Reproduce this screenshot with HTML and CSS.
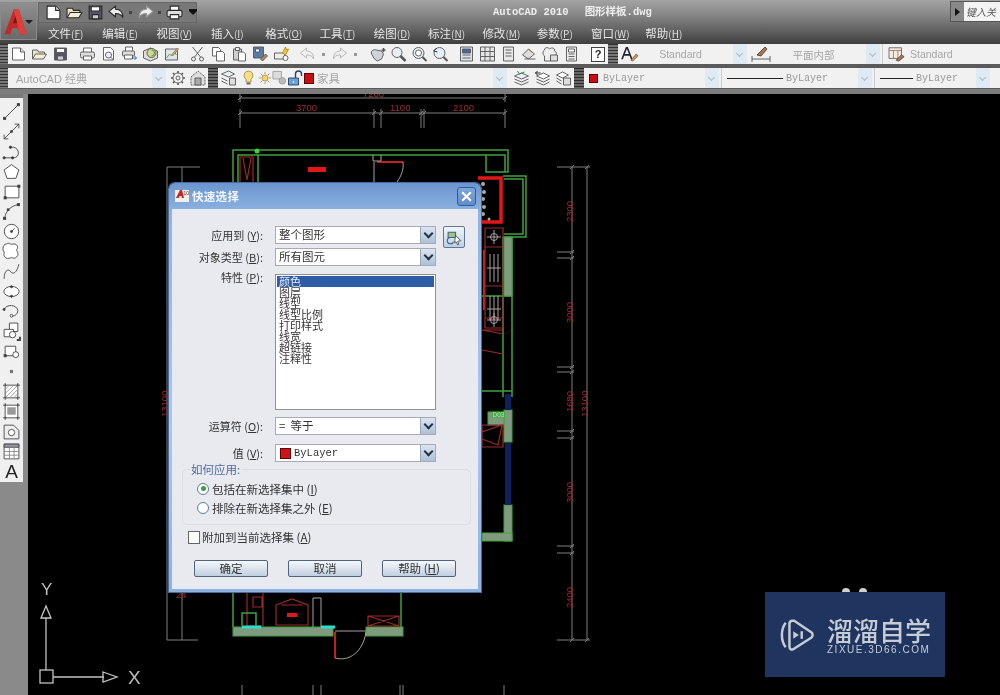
FILE: index.html
```html
<!DOCTYPE html>
<html lang="zh">
<head>
<meta charset="utf-8">
<title>AutoCAD 2010 - 图形样板.dwg</title>
<link rel="stylesheet" href="styles.css">
</head>
<body>
<svg class="defs" width="0" height="0">
<defs>
<symbol id="new" viewBox="0 0 16 16"><path d="M2 2h8l4 4v8H2z" fill="#fff"/><path d="M10 2v4h4" fill="#ddd"/></symbol>
<symbol id="open" viewBox="0 0 16 16"><path d="M1 13V4h5l1 2h6v2" fill="#e8e4c8"/><path d="M1 13l3-5h11l-3 5z" fill="#f4f0d8"/></symbol>
<symbol id="save" viewBox="0 0 16 16"><path d="M2 2h12v12H2z" fill="#556"/><path d="M4 2.500h8v4H4z" fill="#fff"/><path d="M5 10h6v4H5z" fill="#ccc"/></symbol>
<symbol id="print" viewBox="0 0 16 16"><path d="M4 6V2h8v4" fill="#fff"/><rect x="1" y="6" width="14" height="6" rx="1.500" fill="#ddd"/><path d="M4 10h8v4H4z" fill="#fff"/></symbol>
<symbol id="preview" viewBox="0 0 16 16"><path d="M3 1.500h7l3 3V14H3z" fill="#fff"/><circle cx="8" cy="9" r="3" fill="#eef"/><path d="M10 11l3 3"/></symbol>
<symbol id="publish" viewBox="0 0 16 16"><path d="M4 5V1h7v4" fill="#fff"/><rect x="1" y="5" width="12" height="5" rx="1" fill="#ddd"/><path d="M3 9h8v4H3z" fill="#fff"/><path d="M10 12h5m-2-2l2 2-2 2" stroke="#26a"/></symbol>
<symbol id="plot3d" viewBox="0 0 16 16"><path d="M1 5l7-3 7 3v7l-7 3-7-3z" fill="#ddd"/><circle cx="9" cy="7" r="4.500" fill="#cdd890"/><path d="M9 4a3 3 0 0 1 0 6" stroke="#683"/></symbol>
<symbol id="sheet" viewBox="0 0 16 16"><path d="M2 3h12v11H2z" fill="#dfe4ea"/><path d="M3 12l3-4 2 2 3-4 2 3" stroke="#693"/><path d="M8 9l6-7 1 1-6 7z" fill="#eb6" stroke="#875"/></symbol>
<symbol id="cut" viewBox="0 0 16 16"><path d="M3 1l8 10M13 1L5 11"/><circle cx="4" cy="13" r="2"/><circle cx="12" cy="13" r="2"/></symbol>
<symbol id="copy" viewBox="0 0 16 16"><path d="M2 1.500h6l2 2V10H2z" fill="#fff"/><path d="M6 5.500h6l2 2V15H6z" fill="#fff"/></symbol>
<symbol id="paste" viewBox="0 0 16 16"><path d="M2 3h8v11H2z" fill="#cfcfcf"/><path d="M4 1.500h4v3H4z" fill="#eee"/><path d="M7 6h5l2 2v7H7z" fill="#fff"/></symbol>
<symbol id="match" viewBox="0 0 16 16"><path d="M1 1h10v11H1z" fill="#5a7aa8"/><path d="M3 3h4v3H3z" fill="#fff"/><path d="M8 13l5-5 2 2-5 5z" fill="#a86" stroke="#654"/></symbol>
<symbol id="block" viewBox="0 0 16 16"><path d="M1 7h10v6H1z" fill="#eee"/><circle cx="12" cy="12" r="2.500" fill="#fff"/><path d="M9 7l3-6 1 3 2-1-3 6z" fill="#f1c94a" stroke="#b80"/></symbol>
<symbol id="undo" viewBox="0 0 16 16"><path d="M7 2L1 7l6 5V9c4 0 6 1 7 4 0-6-3-8-7-8z" fill="#eee"/></symbol>
<symbol id="redo" viewBox="0 0 16 16"><path d="M9 2l6 5-6 5V9c-4 0-6 1-7 4 0-6 3-8 7-8z" fill="#eee"/></symbol>
<symbol id="pan" viewBox="0 0 16 16"><path d="M2 8c-1-3 2-5 5-4l5 1 2 3-2 5-4 2-3-2z" fill="#cfd2d8"/><path d="M12 4h4M14 2v4" stroke-width="1.500"/></symbol>
<symbol id="zoom" viewBox="0 0 16 16"><circle cx="6.500" cy="6.500" r="5" fill="#e6eef8"/><path d="M10 10l5 5" stroke-width="2.500"/></symbol>
<symbol id="zoomw" viewBox="0 0 16 16"><circle cx="7" cy="7" r="5.500" fill="#e6eef8"/><circle cx="7" cy="7" r="3" fill="#fff"/><path d="M11 11l4 4" stroke-width="2"/></symbol>
<symbol id="zoomp" viewBox="0 0 16 16"><circle cx="7" cy="7" r="5.500" fill="#e6eef8"/><path d="M11 11l4 4" stroke-width="2"/><path d="M4 2L1 5l4 1" stroke="#135"/></symbol>
<symbol id="props" viewBox="0 0 16 16"><path d="M2 1h12v14H2z" fill="#dde3ea"/><path d="M4 3h8v4H4z" fill="#46a"/><path d="M4 9h8M4 12h8"/></symbol>
<symbol id="center" viewBox="0 0 16 16"><path d="M1 1h14v14H1z" fill="#e6e6e6"/><path d="M5.500 1v14M10.500 1v14M1 5.500h14M1 10.500h14"/></symbol>
<symbol id="palette" viewBox="0 0 16 16"><path d="M3 1h10v14H3z" fill="#e8e8e8"/><path d="M5 4h6M5 7h6M5 10h6"/></symbol>
<symbol id="sheetset" viewBox="0 0 16 16"><path d="M1 9l6-6 6 5-6 5z" fill="#ddd"/><path d="M3 13h11" /><path d="M7 3l4 4" stroke="#b80"/></symbol>
<symbol id="markup" viewBox="0 0 16 16"><path d="M2 4c0-3 4-3 5-1 2-2 6-1 5 2 3 1 2 5-1 5H8v5H2v-5c-2-1-2-5 0-6z" fill="#eee"/><path d="M8 9h7v6H8z" fill="#ddd"/></symbol>
<symbol id="calc" viewBox="0 0 16 16"><path d="M3 1h10v14H3z" fill="#eee"/><path d="M5 3h6v3H5z" fill="#fff"/><path d="M5 8h6M5 10.500h6M5 13h6"/></symbol>
<symbol id="stytext" viewBox="0 0 20 18"><path d="M1 15L6 2h1l5 13M3.500 10h7" stroke-width="1.800" stroke="#223"/><path d="M11 16l6-7 2 2-6 6z" fill="#c94" stroke="#754"/></symbol>
<symbol id="stydim" viewBox="0 0 20 18"><path d="M1 11v6M19 11v6M1 14h18"/><path d="M6 10l8-8 2 2-6 7z" fill="#a75" stroke="#543"/></symbol>
<symbol id="stytbl" viewBox="0 0 20 18"><path d="M1 2h14v12H1z" fill="#f3ece0"/><path d="M1 5h14M6 5v9M11 5v9" stroke="#a65"/><path d="M9 16l6-6 3 2-6 5z" fill="#a75" stroke="#543"/></symbol>
<symbol id="gear" viewBox="0 0 16 16"><circle cx="8" cy="8" r="5" fill="none"/><circle cx="8" cy="8" r="2" fill="none"/><path d="M8 1v2M8 13v2M1 8h2M13 8h2M3 3l1.500 1.500M11.500 11.500L13 13M13 3l-1.500 1.500M4.500 11.500L3 13" stroke-width="1.600"/></symbol>
<symbol id="wsp" viewBox="0 0 16 16"><path d="M1 7l7-6 7 6v8H1z" fill="#ddd" stroke-dasharray="2 1"/><path d="M5 8h6v7H5z" fill="#aaa"/></symbol>
<symbol id="layers" viewBox="0 0 16 16"><path d="M1 4l7-3 6 3-6 3z" fill="#e8eef6"/><path d="M1 8l6 3" /><path d="M9 8h6v7H9z" fill="#ddd"/><path d="M1 11l6 3"/></symbol>
<symbol id="layst" viewBox="0 0 16 16"><path d="M1 6l7-3 7 3-7 3z" fill="#eef"/><path d="M1 9l7 3 7-3M1 12l7 3 7-3"/><path d="M4 1l2 3 5-2" stroke="#283"/></symbol>
<symbol id="layprev" viewBox="0 0 16 16"><path d="M2 6l7-3 6 3-6 3z" fill="#fff"/><path d="M2 9l7 3 6-3M2 12l7 3 6-3"/><path d="M1 3h5M1 3l2-2M1 3l2 2" stroke="#111"/></symbol>
<symbol id="laymat" viewBox="0 0 16 16"><path d="M1 5l6-3 6 3-6 3z" fill="#fff"/><path d="M1 8l5 3M1 11l5 3"/><path d="M8 8h7v7H8z" fill="#ddd"/></symbol>
<symbol id="bulb" viewBox="0 0 12 16"><path d="M6 1a4.500 4.500 0 0 1 2.500 8.200V12h-5V9.200A4.500 4.500 0 0 1 6 1z" fill="#f6e27a" stroke="#a87"/><path d="M4 13.500h4" stroke="#667" stroke-width="2"/></symbol>
<symbol id="sun" viewBox="0 0 16 16"><circle cx="8" cy="8" r="3.500" fill="#f4d65a" stroke="#a86"/><path d="M8 1v2.500M8 12.500V15M1 8h2.500M12.500 8H15M3 3l2 2M11 11l2 2M13 3l-2 2M5 11l-2 2" stroke="#a86"/></symbol>
<symbol id="frz" viewBox="0 0 16 16"><path d="M1 1h9v8H1z" fill="#ddd" stroke="#999"/><circle cx="11" cy="11" r="3.500" fill="#bbb" stroke="#999"/></symbol>
<symbol id="lock" viewBox="0 0 16 16"><path d="M1 8h10v7H1z" fill="#6ba3d6" stroke="#246"/><path d="M8 8V4a3 3 0 0 1 6 0v2" stroke="#246" stroke-width="1.400"/><path d="M6 11v2" stroke="#fff"/></symbol>

<symbol id="t-line" viewBox="0 0 18 18"><path d="M2.500 15.500l13-13"/><rect x="1.500" y="14.500" width="2" height="2" fill="#333"/><rect x="14.500" y="1.500" width="2" height="2" fill="#333"/></symbol>
<symbol id="t-xline" viewBox="0 0 18 18"><path d="M2 16L16 2M2 16v-4M2 16h4M16 2h-4M16 2v4"/><circle cx="9" cy="9" r="1" fill="#333"/></symbol>
<symbol id="t-pline" viewBox="0 0 18 18"><path d="M2 15h9c6 0 6-9 0-10H8"/><circle cx="2" cy="15" r="1.100" fill="#333"/><circle cx="10" cy="15" r="1.100" fill="#333"/><circle cx="8" cy="5" r="1.100" fill="#333"/></symbol>
<symbol id="t-poly" viewBox="0 0 18 18"><path d="M9 2.500l7 5-2.800 8H4.800L2 7.500z" fill="#fff"/></symbol>
<symbol id="t-rect" viewBox="0 0 18 18"><path d="M3 4h13v11H3z" fill="#fff"/><rect x="2" y="14" width="2" height="2" fill="#333"/><rect x="15" y="3" width="2" height="2" fill="#333"/></symbol>
<symbol id="t-arc" viewBox="0 0 18 18"><path d="M2.500 15.500C3.500 8 9 3.500 15.500 2.500"/><rect x="1.500" y="14.500" width="2" height="2" fill="#333"/><rect x="14.500" y="1.500" width="2" height="2" fill="#333"/><rect x="5" y="6.500" width="1.600" height="1.600" fill="#333"/></symbol>
<symbol id="t-circle" viewBox="0 0 18 18"><circle cx="9" cy="9" r="6.800" fill="#fff"/><circle cx="9" cy="9" r="1" fill="#333"/><path d="M9 9l3-3"/></symbol>
<symbol id="t-cloud" viewBox="0 0 18 18"><path d="M4 2c3-2 4 1 6 0 4-1 6 3 4 5-1 1 3 4 0 7-3 3-4 0-6 1-4 2-7-2-6-4 1-2-2-3-1-5 0-2 1-4 3-4z" fill="#fff"/></symbol>
<symbol id="t-spline" viewBox="0 0 18 18"><path d="M2 16C2 8 6 6 8 9s6 2 8-7"/></symbol>
<symbol id="t-ellipse" viewBox="0 0 18 18"><ellipse cx="9" cy="9" rx="7.200" ry="4.800" fill="#fff"/><circle cx="9" cy="4.500" r="1" fill="#333"/><circle cx="9" cy="13.500" r="1" fill="#333"/></symbol>
<symbol id="t-earc" viewBox="0 0 18 18"><path d="M2 7c2-5 12-5 13 1 0 4-4 6-6 5"/><circle cx="2" cy="7" r="1" fill="#333"/><circle cx="9" cy="13" r="1.300" fill="#fff"/></symbol>
<symbol id="t-insert" viewBox="0 0 18 18"><path d="M7 1h8v8H7z" fill="#fff"/><path d="M2 7h9v7H2z" fill="#fff"/><circle cx="10" cy="12" r="3" fill="#fff"/><path d="M17 14v3h-3" stroke-width="1.800"/></symbol>
<symbol id="t-block" viewBox="0 0 18 18"><path d="M3 4h10v9H3z" fill="#fff"/><circle cx="13" cy="12" r="2.800" fill="#fff"/><rect x="2" y="12" width="2" height="2" fill="#333"/></symbol>
<symbol id="t-point" viewBox="0 0 18 18"><rect x="7.500" y="7.500" width="3" height="3" fill="#777" stroke="none"/></symbol>
<symbol id="t-hatch" viewBox="0 0 18 18"><path d="M3 3h12v12H3z" fill="#fff"/><path d="M3 7l4-4M3 11l8-8M3 15L15 3M7 15l8-8M11 15l4-4" stroke="#999"/><path d="M1 3h3M14 3h3M1 15h3M14 15h3M3 1v3M15 1v3M3 14v3M15 14v3"/></symbol>
<symbol id="t-grad" viewBox="0 0 18 18"><path d="M3 3h12v12H3z" fill="#fff"/><path d="M5 5h8v7H5z" fill="#999" stroke="none"/><path d="M1 3h3M14 3h3M1 15h3M14 15h3M3 1v3M15 1v3M3 14v3M15 14v3"/></symbol>
<symbol id="t-region" viewBox="0 0 18 18"><path d="M2 3h9l5 5v8H2z" fill="#eee"/><circle cx="9" cy="10" r="3" fill="#fff"/></symbol>
<symbol id="t-table" viewBox="0 0 18 18"><path d="M2 2h14v14H2z" fill="#fff"/><path d="M2 2h14v3H2z" fill="#99a"/><path d="M2 9h14M2 12.500h14M7 5v11M11.500 5v11" stroke="#888"/></symbol>
</defs>
</svg>

<div class="app">
  <header class="chrome">
    <div class="appbtn">
      <svg class="appglyph" viewBox="0 0 34 34"><path d="M4 32L15 3h6l9 29h-8l-2-7h-7l-2 7z" fill="#c02a28"/><path d="M15 3h6l9 29h-8z" fill="#e0403a"/><path d="M14 19h5l-2-8z" fill="#7d1412"/></svg>
      <span class="appcaret"></span>
    </div>
    <div class="chrome-main">
      <div class="titlerow">
        <div class="qa">
          <svg class="qi"><use href="#new"/></svg>
          <svg class="qi"><use href="#open"/></svg>
          <svg class="qi"><use href="#save"/></svg>
          <svg class="qi"><use href="#undo"/></svg>
          <span class="qcaret"></span>
          <svg class="qi dim"><use href="#redo"/></svg>
          <span class="qcaret"></span>
          <svg class="qi"><use href="#print"/></svg>
          <span class="qmore"></span>
        </div>
        <div class="apptitle"><span>AutoCAD 2010</span><span>图形样板.dwg</span></div>
        <div class="search"><span class="search-arrow"></span><span class="search-input">键入关</span></div>
      </div>
      <nav class="menubar">
        <span>文件<i>(<u>F</u>)</i></span><span>编辑<i>(<u>E</u>)</i></span><span>视图<i>(<u>V</u>)</i></span><span>插入<i>(<u>I</u>)</i></span><span>格式<i>(<u>O</u>)</i></span><span>工具<i>(<u>T</u>)</i></span><span>绘图<i>(<u>D</u>)</i></span><span>标注<i>(<u>N</u>)</i></span><span>修改<i>(<u>M</u>)</i></span><span>参数<i>(<u>P</u>)</i></span><span>窗口<i>(<u>W</u>)</i></span><span>帮助<i>(<u>H</u>)</i></span>
      </nav>
    </div>
  </header>

  <div class="tbrow tbrow-1">
    <span class="grip"></span>
    <div class="seg seg-std">
      <svg class="ic"><use href="#new"/></svg><svg class="ic"><use href="#open"/></svg><svg class="ic"><use href="#save"/></svg><span class="sep s6"></span>
      <svg class="ic"><use href="#print"/></svg><svg class="ic"><use href="#preview"/></svg><svg class="ic"><use href="#publish"/></svg><svg class="ic"><use href="#plot3d"/></svg><svg class="ic"><use href="#sheet"/></svg><span class="sep s5"></span>
      <svg class="ic"><use href="#cut"/></svg><svg class="ic"><use href="#copy"/></svg><svg class="ic"><use href="#paste"/></svg><svg class="ic"><use href="#match"/></svg><svg class="ic"><use href="#block"/></svg><span class="sep s5"></span>
      <svg class="ic dim"><use href="#undo"/></svg><span class="tinycaret"></span><svg class="ic dim"><use href="#redo"/></svg><span class="tinycaret"></span><span class="sep s6"></span>
      <svg class="ic"><use href="#pan"/></svg><svg class="ic"><use href="#zoom"/></svg><svg class="ic"><use href="#zoomw"/></svg><svg class="ic"><use href="#zoomp"/></svg><span class="sep s5"></span>
      <svg class="ic"><use href="#props"/></svg><svg class="ic"><use href="#center"/></svg><svg class="ic"><use href="#palette"/></svg><svg class="ic"><use href="#sheetset"/></svg><svg class="ic"><use href="#markup"/></svg><svg class="ic"><use href="#calc"/></svg><span class="sep s5"></span>
      <span class="helpbtn">?</span>
    </div>
    <span class="grip grip-wide"></span>
    <div class="seg seg-styles">
      <svg class="ic ic-wide"><use href="#stytext"/></svg>
      <div class="combo combo-a"><span class="combo-text ctr">Standard</span><span class="drop"></span></div>
      <svg class="ic ic-wider"><use href="#stydim"/></svg>
      <div class="combo combo-a"><span class="combo-text ctr">平面内部</span><span class="drop"></span></div>
      <span class="vsep"></span>
      <svg class="ic ic-wide"><use href="#stytbl"/></svg>
      <span class="combo-text tbl">Standard</span>
    </div>
  </div>

  <div class="tbrow tbrow-2">
    <span class="grip"></span>
    <div class="seg seg-ws">
      <div class="combo combo-ws"><span class="combo-text wstext">AutoCAD 经典</span><span class="drop"></span></div>
      <svg class="ic ic-20"><use href="#gear"/></svg>
      <svg class="ic ic-20"><use href="#wsp"/></svg>
    </div>
    <span class="grip grip-mid"></span>
    <div class="seg seg-layer">
      <svg class="ic"><use href="#layers"/></svg>
      <svg class="ic lic18"><use href="#bulb"/></svg>
      <svg class="ic lic14"><use href="#sun"/></svg>
      <svg class="ic lic15"><use href="#frz"/></svg>
      <svg class="ic lic16"><use href="#lock"/></svg>
      <span class="swatch"></span>
      <span class="combo-text layername">家具</span>
      <span class="drop"></span>
      <span class="lay-gap"></span>
      <svg class="ic lic21"><use href="#layst"/></svg>
      <svg class="ic lic21"><use href="#layprev"/></svg>
      <svg class="ic lic21"><use href="#laymat"/></svg>
    </div>
    <span class="grip grip-mid"></span>
    <div class="seg seg-props">
      <div class="combo combo-color"><span class="swatch swatch-s"></span><span class="serif">ByLayer</span><span class="drop"></span></div>
      <span class="vsep"></span>
      <div class="combo combo-lt"><span class="ltline lt56"></span><span class="serif">ByLayer</span><span class="drop"></span></div>
      <span class="vsep"></span>
      <div class="combo combo-lw"><span class="ltline lt33"></span><span class="serif">ByLayer</span><span class="drop"></span></div>
    </div>
  </div>

  <div class="tb-under"></div>

  <main class="work">
    <aside class="draw-tools">
      <span class="tools-grip"></span>
      <svg class="tool"><use href="#t-line"/></svg>
      <svg class="tool"><use href="#t-xline"/></svg>
      <svg class="tool"><use href="#t-pline"/></svg>
      <svg class="tool"><use href="#t-poly"/></svg>
      <svg class="tool"><use href="#t-rect"/></svg>
      <svg class="tool"><use href="#t-arc"/></svg>
      <svg class="tool"><use href="#t-circle"/></svg>
      <svg class="tool"><use href="#t-cloud"/></svg>
      <svg class="tool"><use href="#t-spline"/></svg>
      <svg class="tool"><use href="#t-ellipse"/></svg>
      <svg class="tool"><use href="#t-earc"/></svg>
      <svg class="tool"><use href="#t-insert"/></svg>
      <svg class="tool"><use href="#t-block"/></svg>
      <svg class="tool"><use href="#t-point"/></svg>
      <svg class="tool"><use href="#t-hatch"/></svg>
      <svg class="tool"><use href="#t-grad"/></svg>
      <svg class="tool"><use href="#t-region"/></svg>
      <svg class="tool"><use href="#t-table"/></svg>
      <span class="tool-a">A</span>
    </aside>

    <section class="canvas">
      <svg class="plan" viewBox="28 94 972 601">
        <g class="dim-lines">
          <path d="M240 98h265M240 113h265M240 94v8M505 94v8M240 109v19M374 109v19M381 109v19M421 109v19M424 109v19M505 109v19"/>
          <path d="M238 100l4-4M503 100l4-4M238 115l4-4M372 115l4-4M379 115l4-4M419 115l4-4M422 115l4-4M503 115l4-4"/>
          <path d="M572 167v473M587 167v473M557 167h33M557 252h17M557 258h17M557 367h17M557 372h17M557 431h17M557 438h17M557 546h17M557 553h17M557 640h33"/>
          <path d="M570 169l4-4M585 169l4-4M570 254l4-4M570 260l4-4M570 369l4-4M570 374l4-4M570 433l4-4M570 440l4-4M570 548l4-4M570 555l4-4M570 642l4-4M585 642l4-4"/>
          <path d="M167 167h33M167 167v473M182 167v473M167 640h31"/>
          <path d="M242 685v10M313 685v10M321 685v10M400 685v10M403 685v10M504 685v10"/>
        </g>
        <g class="dim-text">
          <text x="363" y="97">7280</text>
          <text x="296" y="111">3700</text>
          <text x="390" y="111">1100</text>
          <text x="453" y="111">2100</text>
          <text transform="translate(573 222) rotate(-90)">2300</text>
          <text transform="translate(573 323) rotate(-90)">3000</text>
          <text transform="translate(573 412) rotate(-90)">1680</text>
          <text transform="translate(588 417) rotate(-90)">13100</text>
          <text transform="translate(573 503) rotate(-90)">3000</text>
          <text transform="translate(573 608) rotate(-90)">2400</text>
          <text transform="translate(168 417) rotate(-90)">13100</text>
          <text x="176" y="598">24</text>
        </g>
        <g class="walls">
          <path d="M233 184v-34h275v22h-22v-17H238v29M238 155h20M258 155v29"/>
          <path d="M486 155h19v17M503 176h23v61h-23M504 179h19v55h-19"/>
          <path d="M233 592v35M401 592v35M503 237v160M512 237v160M482 296h30"/>
          <path d="M482 391h30"/>
        </g>
        <circle class="greenblob" cx="257" cy="151" r="2.500"/>
        <rect class="wall-fill" x="504" y="237" width="8" height="59"/>
        <rect class="wall-fill" x="504" y="410" width="8" height="32"/>
        <rect class="wall-fill" x="504" y="505" width="8" height="36"/>
        <rect class="wall-fill" x="482" y="533" width="30" height="8"/>
        <rect class="wall-fill" x="233" y="627" width="100" height="9"/>
        <rect class="wall-fill" x="366" y="627" width="37" height="9"/>
        <rect class="wall-fill" x="488" y="412" width="16" height="13"/>
        <rect class="win" x="505" y="394" width="6" height="16"/>
        <rect class="win" x="505" y="443" width="6" height="62"/>
        <rect class="tag" x="491" y="411" width="13" height="7"/>
        <text class="tagtext" x="492.500" y="417">D03</text>
        <g class="red-thick">
          <path d="M478 178h23v44h-20"/>
        </g>
        <rect class="redblob" x="308" y="167" width="18" height="5"/>
        <g class="darkred">
          <path d="M240 157h13v26h-13zM243 158l4 22 4-22"/>
          <path d="M485 228h18v100h-18zM485 247h18M485 286h18M485 318h18M482 330h21M482 330l21 4M482 350l21 4"/>
          <path d="M482 425h21v22h-21zM482 432l20-7-4 20-16-6"/>
          <path d="M247 592h16v34h-16zM253 597h9v10h-9z"/>
          <path d="M276 605l16-6 16 6v20h-32zM281 605h22"/>
          <path d="M368 616h31v10h-31zM368 616l31 10M399 616l-31 10"/>
        </g>
        <rect class="redblob" x="287" y="613" width="10" height="4"/>
        <g class="red-line"><path d="M377 162h26M335 632v26M484 250v60"/></g>
        <g class="furn">
          <path d="M494 230v14M487 237h14M490 254v28M494 254v28M498 254v28M490 296v24M494 296v24M498 296v24M487 268h14M487 309h14M494 313v14M487 320h14M374 162v20"/>
          <circle cx="494" cy="237" r="3.500"/><circle cx="494" cy="320" r="3.500"/>
          <path d="M403 162c1 8-2 14-6 20M335 658c14 4 28-6 31-26M335 631h31"/>
          <path d="M373 155v6h8v-6"/>
          <path d="M313 627v-29h8v29"/>
        </g>
        <g class="grey-dots">
          <circle cx="483" cy="184" r="2"/><circle cx="484" cy="192" r="2"/><circle cx="483" cy="199" r="2"/><circle cx="484" cy="207" r="2"/><circle cx="483" cy="214" r="2"/><circle cx="489" cy="219" r="1.500"/>
        </g>
        <g class="cyan"><path d="M242 627h19M321 627h14"/></g>
        <path class="greenbox" d="M242 626v-13h14v13"/>
        <g class="ucs">
          <rect x="40" y="670" width="13" height="13"/>
          <path d="M53 677h51M46 670v-52"/>
          <path class="ucs-arrow" d="M103 672l14 5-14 5zM41 618l5-12 5 12z"/>
          <text class="ucs-y" x="41" y="595">Y</text>
          <text x="128" y="684">X</text>
        </g>
        <g class="wm-dots"><circle cx="846" cy="592" r="4"/><circle cx="863" cy="592" r="4"/></g>
      </svg>

      <div class="dialog">
        <div class="dlg-title">
          <svg class="dlg-logo" viewBox="0 0 14 14"><path d="M0 1h14v12H0z" fill="#f2efe8"/><path d="M1 9L5 1h2l2 8H7L6.500 7h-2L3.500 9z" fill="#c22"/><text class="dlg-logo-t" x="8.500" y="6">10</text></svg>
          <span class="dlg-name">快速选择</span>
          <span class="dlg-close"><svg viewBox="0 0 12 12"><path d="M2 2l8 8M10 2l-8 8"/></svg></span>
        </div>
        <div class="dlg-body">
          <div class="form-row r1">
            <label class="lbl">应用到 (<u>Y</u>):</label>
            <div class="sel"><span>整个图形</span><span class="sel-drop"></span></div>
            <span class="pick"><svg viewBox="0 0 16 16"><path d="M2 3h7v5H2z" fill="#9cc28a" stroke="#467"/><path d="M4 8a3 3 0 1 0 3 4" fill="none" stroke="#467"/><path d="M9 6l5 5-3 .5 1 3-1 .5-1.500-3L8 13z" fill="#fff" stroke="#333" stroke-width=".7"/></svg></span>
          </div>
          <div class="form-row r2">
            <label class="lbl">对象类型 (<u>B</u>):</label>
            <div class="sel"><span>所有图元</span><span class="sel-drop"></span></div>
          </div>
          <div class="form-row r3">
            <label class="lbl lbl-top">特性 (<u>P</u>):</label>
            <div class="listbox">
              <div class="opt on">颜色</div>
              <div class="opt">图层</div>
              <div class="opt">线型</div>
              <div class="opt">线型比例</div>
              <div class="opt">打印样式</div>
              <div class="opt">线宽</div>
              <div class="opt">超链接</div>
              <div class="opt">注释性</div>
            </div>
          </div>
          <div class="form-row r4">
            <label class="lbl">运算符 (<u>O</u>):</label>
            <div class="sel"><span>=&nbsp; 等于</span><span class="sel-drop"></span></div>
          </div>
          <div class="form-row r5">
            <label class="lbl">值 (<u>V</u>):</label>
            <div class="sel"><span class="val"><span class="swatch swatch-v"></span><span class="serif-dark">ByLayer</span></span><span class="sel-drop"></span></div>
          </div>
          <div class="group">
            <span class="legend">如何应用:</span>
            <div class="radio-row"><span class="radio checked"></span><span>包括在新选择集中 (<u>I</u>)</span></div>
            <div class="radio-row"><span class="radio"></span><span>排除在新选择集之外 (<u>E</u>)</span></div>
          </div>
          <div class="check-row"><span class="check"></span><span>附加到当前选择集 (<u>A</u>)</span></div>
          <div class="btn-row">
            <span class="btn">确定</span>
            <span class="btn">取消</span>
            <span class="btn">帮助 (<u>H</u>)</span>
          </div>
        </div>
      </div>

      <div class="watermark">
        <svg class="wm-logo" viewBox="0 0 36 36"><path d="M6 5C3 9 2 13 2 18s1 9 4 13" /><path d="M13 3c-2 0-3 1-3 3v24c0 3 2 4 4 3l19-12c2-1 2-5 0-6L15 3z"/><path d="M14 14v8l6-4z" class="wm-fill"/><path d="M23 14v8"/></svg>
        <div class="wm-text">
          <div class="wm-cn">溜溜自学</div>
          <div class="wm-en">ZIXUE.3D66.COM</div>
        </div>
      </div>
    </section>
  </main>
</div>
</body>
</html>
```
FILE: styles.css
```css
* { box-sizing: border-box; }
html, body { margin: 0; padding: 0; height: 100%; overflow: hidden; background: #000; }
.defs { position: absolute; }
.app { width: 1000px; height: 695px; display: flex; flex-direction: column; font-family: "Noto Sans CJK SC", "Liberation Sans", sans-serif; background: #5a5a5a; filter: blur(.45px); }

/* title + menu */
.chrome { height: 44px; display: flex; background: linear-gradient(#a3a3a3, #8a8a8a 30%, #5e5e5e 72%, #3e3e3e); flex: none; }
.appbtn { width: 37px; height: 38px; margin-top: 2px; position: relative; background: linear-gradient(#8f8f8f, #6a6a6a); border: 1px solid #8a8a8a; flex: none; }
.appglyph { width: 29px; height: 33px; position: absolute; left: 0; top: 2px; display: block; }
.appcaret { position: absolute; right: 3px; top: 17px; border: 4px solid transparent; border-top: 4px solid #222; border-bottom: 0; }
.chrome-main { flex: 1; min-width: 0; display: flex; flex-direction: column; }
.titlerow { height: 23px; display: flex; padding-top: 2px; flex: none; }
.qa { width: 159px; height: 21px; margin-left: 1px; display: flex; align-items: center; padding-left: 6px; background: #787878; border: 1px solid #666; flex: none; }
.qi { width: 17px; height: 17px; margin-right: 4px; fill: none; stroke: #2a2a2a; stroke-width: 1; flex: none; }
.qi.dim { stroke: #999; }
.qcaret { width: 3px; height: 3px; background: #444; margin: 0 5px 0 0; flex: none; }
.qmore { border: 4px solid transparent; border-top: 4px solid #111; border-bottom: 0; margin-left: 2px; box-shadow: 0 -2px 0 #111; }
.apptitle { margin-left: 296px; width: 250px; display: flex; gap: 16px; color: #eee; font: bold 10.500px/20px "Liberation Mono", "Noto Sans CJK SC", monospace; flex: none; }
.search { margin-left: auto; width: 50px; height: 21px; margin-top: -1px; background: #888; border: 1px solid #555; border-right: 0; display: flex; align-items: center; }
.search-arrow { border: 4px solid transparent; border-left: 5px solid #111; border-right: 0; margin: 0 4px 0 4px; }
.search-input { flex: 1; height: 100%; background: #f4f4f4; font-size: 10px; line-height: 19px; font-style: italic; color: #555; padding-left: 2px; overflow: hidden; white-space: nowrap; }
.menubar { flex: 1; display: flex; gap: 18.300px; padding-left: 11px; align-items: center; color: #e6e6e6; font-size: 11.500px; line-height: 19px; }
.menubar span { white-space: nowrap; width: 36px; }
.menubar i { font-style: normal; font-size: 10px; color: #ddd; }

/* toolbars */
.tbrow { height: 20px; display: flex; flex: none; }
.tbrow-2 { margin-top: 4px; }
.grip { width: 8px; background: repeating-linear-gradient(#333 0 1px, #777 1px 3px); flex: none; }
.grip-wide { width: 10px; }
.grip-mid { width: 10px; background: repeating-linear-gradient(#2c2c2c 0 1px, #666 1px 3px); }
.seg { height: 20px; display: flex; align-items: center; background: #f1f1f1; flex: none; }
.seg-std { width: 600px; }
.seg-styles { flex: 1; min-width: 0; }
.seg-ws { width: 200px; }
.seg-layer { width: 356px; }
.seg-props { flex: 1; min-width: 0; }
.ic { width: 21px; height: 16px; fill: none; stroke: #555; stroke-width: .9; flex: none; }
.ic.dim { stroke: #b4b4b4; }
.ic-wide { width: 24px; }
.ic-wider { width: 28px; height: 18px; }
.ic-20 { width: 20px; }
.lic18 { width: 19px; }
.lic14 { width: 14px; }
.lic15 { width: 15px; stroke: #999; }
.lic16 { width: 17px; }
.lic21 { width: 21px; }
.sep { flex: none; height: 16px; }
.s5 { width: 5px; }
.s6 { width: 6px; }
.tinycaret { width: 11px; height: 17px; flex: none; background: radial-gradient(circle at 50% 50%, #999 0 1.500px, transparent 2px); }
.helpbtn { width: 14px; height: 15px; margin-left: 4px; border: 1.500px solid #444; background: #fff; font: bold 11px/12px "Liberation Sans", sans-serif; text-align: center; color: #222; flex: none; }
.combo { display: flex; align-items: center; height: 20px; flex: none; }
.combo-a { width: 105px; }
.combo-text { color: #a6a6a6; font-size: 10.500px; white-space: nowrap; font-family: "Liberation Sans", "Noto Sans CJK SC", sans-serif; }
.ctr { flex: 1; text-align: center; padding-right: 14px; }
.tbl { margin-left: 1px; }
.drop { width: 14px; height: 20px; background: #dfeaf5; position: relative; flex: none; }
.drop::after { content: ""; position: absolute; left: 4px; top: 7px; width: 4px; height: 4px; border-right: 1.500px solid #a9bacb; border-bottom: 1.500px solid #a9bacb; transform: rotate(45deg); }
.vsep { width: 1px; height: 20px; margin: 0 2px; background: #ccc; flex: none; }
.combo-ws { width: 160px; }
.wstext { flex: 1; padding-left: 8px; font-size: 11px; }
.combo-ws .drop { margin-right: 2px; }
.swatch { width: 10px; height: 11px; background: #c50f15; border: 1px solid #600; flex: none; }
.layername { margin-left: 3px; width: 178px; font-size: 11.500px; }
.lay-gap { width: 4px; flex: none; }
.swatch-s { width: 9px; height: 9px; margin: 0 5px; }
.serif { font: 10px "Liberation Mono", monospace; color: #999; flex: 1; white-space: nowrap; }
.combo-color { width: 135px; }
.combo-lt { width: 148px; }
.combo-lw { width: 113px; }
.ltline { height: 1px; background: #222; flex: none; margin: 0 3px; }
.lt56 { width: 56px; }
.lt33 { width: 33px; }
.tb-under { height: 6px; background: #7d7d7d; border-top: 1px solid #5a5a5a; flex: none; }

/* work area */
.work { flex: 1; min-height: 0; display: flex; background: #8a8a8a; }
.draw-tools { width: 23px; height: 388px; display: flex; flex-direction: column; align-items: center; background: #f0f0f0; flex: none; }
.tools-grip { width: 23px; height: 4px; background: #777; flex: none; margin-bottom: 4px; }
.tool { width: 19px; height: 19px; margin-bottom: 1px; fill: none; stroke: #444; stroke-width: .85; flex: none; }
.tool-a { font: 19px/20px "Liberation Sans", sans-serif; color: #222; }
.canvas { margin-left: 5px; flex: 1; position: relative; background: #000; overflow: hidden; }
.plan { width: 972px; height: 601px; display: block; fill: none; }
.dim-lines path { stroke: #7e7e7e; stroke-width: 1; }
.dim-text text { fill: #a32a2a; font: 9.500px "Liberation Sans", sans-serif; }
.walls path { stroke: #3fa33f; stroke-width: 1.500; }
.greenblob { fill: #40d040; }
.wall-fill { fill: #7f9a7f; stroke: #3fa33f; }
.win { fill: #10205e; }
.tag { fill: #0a0; opacity: .25; stroke: #3c3; }
.tagtext { fill: #8f8; font: 6.500px "Liberation Sans", sans-serif; }
.red-thick path { stroke: #e01818; stroke-width: 3.500; }
.redblob { fill: #e01818; }
.darkred path { stroke: #9a2a2a; stroke-width: 1.200; }
.red-line path { stroke: #c02020; stroke-width: 2; }
.furn path, .furn circle { stroke: #b0a0a0; stroke-width: 1; }
.grey-dots circle { fill: #aaa; }
.cyan path { stroke: #27e0d0; stroke-width: 3; }
.greenbox { stroke: #3fa33f; stroke-width: 1.500; }
.ucs rect, .ucs path { stroke: #c4c4c4; stroke-width: 1.300; }
.ucs text { fill: #bdbdbd; font: 19px "Liberation Sans", sans-serif; }
.ucs .ucs-y { font-size: 17px; }
.wm-dots circle { fill: #cfcfcf; }

/* dialog */
.dialog { position: absolute; left: 141px; top: 89px; width: 312px; height: 409px; padding: 0 3px 3px; background: linear-gradient(#6b95cf 0, #8fb4e2 30px, #a9c8ec 60%, #8cb2e2); border-radius: 6px 6px 0 0; box-shadow: 0 0 0 1px #4a6a9a; display: flex; flex-direction: column; font-size: 11px; color: #333; }
.dlg-title { height: 26px; display: flex; align-items: center; flex: none; }
.dlg-logo { width: 14px; height: 14px; margin-left: 3px; }
.dlg-logo-t { fill: #444; font: 5px "Liberation Sans", sans-serif; }
.dlg-name { margin-left: 3px; color: #f0f5fb; font-size: 11.500px; font-weight: 700; letter-spacing: .3px; }
.dlg-close { margin-left: auto; margin-right: 2px; width: 19px; height: 19px; border: 1px solid #2f5c9c; border-radius: 3px; background: linear-gradient(#7fa6d8, #5f8dca); display: flex; }
.dlg-close svg { width: 13px; height: 13px; margin: auto; fill: none; stroke: #fff; stroke-width: 2; }
.dlg-body { flex: 1; background: #e9e9f0; padding-top: 17px; min-height: 0; }
.form-row { display: grid; grid-template-columns: 91px 161px auto; column-gap: 12px; }
.r1 { height: 18px; }
.r2 { margin-top: 4px; }
.r3 { margin-top: 8px; }
.r4 { margin-top: 7px; }
.r5 { margin-top: 9px; }
.lbl { text-align: right; line-height: 18px; white-space: nowrap; font-size: 11px; }
.lbl-top { line-height: 6px; }
.sel { height: 18px; display: flex; justify-content: space-between; background: #fff; border: 1px solid #a8a8b8; line-height: 15px; padding-left: 3px; font-size: 11.500px; }
.sel-drop { width: 15px; height: 16px; background: linear-gradient(#dbe5f2, #aebfd6); border-left: 1px solid #9aa8bc; position: relative; flex: none; }
.sel-drop::after { content: ""; position: absolute; left: 3.500px; top: 3px; width: 5px; height: 5px; border-right: 2px solid #234; border-bottom: 2px solid #234; transform: rotate(45deg); }
.pick { width: 22px; height: 22px; margin-left: -5px; border: 1px solid #5f7795; border-radius: 2px; background: linear-gradient(#f2f5f9, #bcd0e6); display: flex; }
.pick svg { width: 17px; height: 17px; margin: auto; }
.listbox { height: 136px; background: #fff; border: 1px solid #909098; padding: 1px; }
.opt { height: 11px; line-height: 11px; padding-left: 2px; font-size: 11px; color: #333; white-space: nowrap; }
.opt.on { background: #2f5da5; color: #dfe8f6; }
.val { display: flex; align-items: center; }
.swatch-v { width: 11px; height: 11px; margin: 0 3px 0 1px; background: #c91418; }
.serif-dark { font: 10.500px "Liberation Mono", monospace; color: #333; line-height: 16px; }
.group { position: relative; margin: 7px 0 0 10px; width: 289px; height: 56px; border: 1px solid #dcdce2; border-radius: 5px; padding-top: 9px; }
.legend { position: absolute; left: 7px; top: -8px; padding: 0 1px; background: #e9e9f0; color: #4b6c9e; font-size: 11.500px; line-height: 14px; }
.radio-row { height: 19px; display: flex; align-items: center; padding-left: 14px; gap: 3px; font-size: 11.500px; }
.radio { width: 12px; height: 12px; border-radius: 50%; border: 1px solid #5f7a96; background: #fff; flex: none; position: relative; }
.radio.checked::after { content: ""; position: absolute; left: 2.500px; top: 2.500px; width: 5px; height: 5px; border-radius: 50%; background: #3f9a4a; }
.check-row { margin: 5px 0 0 16px; display: flex; align-items: center; gap: 2px; height: 14px; font-size: 11.500px; }
.check { width: 12px; height: 13px; background: #fff; border: 1px solid #666; flex: none; }
.btn-row { margin: 16px 0 0 22px; display: flex; gap: 20px; }
.btn { width: 74px; height: 17px; border: 1px solid #4e6480; border-radius: 2px; background: linear-gradient(#f6f8fb, #c0cfe0); text-align: center; font-size: 11.500px; line-height: 14px; color: #333; }

/* watermark */
.watermark { position: absolute; left: 737px; top: 498px; width: 180px; height: 85px; background: #1f355f; display: flex; align-items: flex-start; padding: 25px 0 0 15px; }
.wm-logo { width: 34px; height: 34px; fill: none; stroke: #c6ccd6; stroke-width: 2.600; flex: none; margin-top: 1px; }
.wm-fill { fill: #c6ccd6; stroke: none; }
.wm-text { margin-left: 13px; color: #c6ccd6; }
.wm-cn { font-size: 26px; line-height: 26px; font-weight: 500; white-space: nowrap; }
.wm-en { margin-top: 2px; font: 10px/10px "Liberation Sans", sans-serif; letter-spacing: 1.500px; white-space: nowrap; }
```
